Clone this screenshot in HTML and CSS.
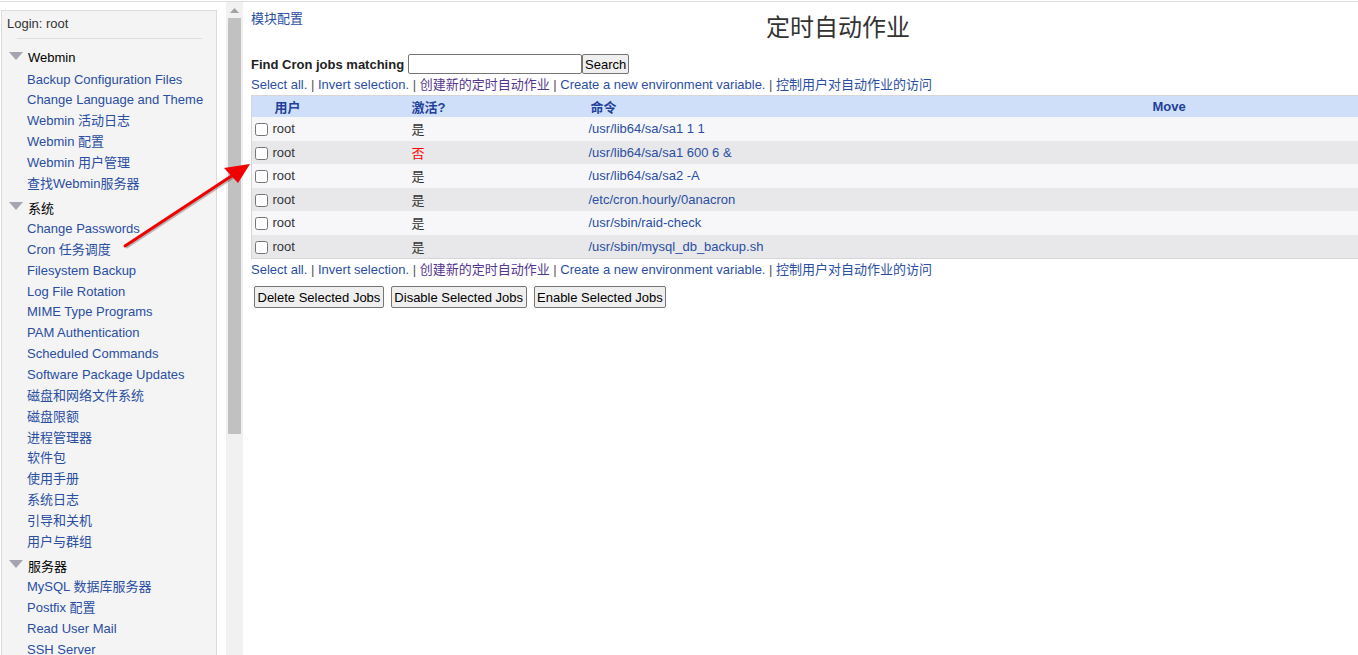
FILE: index.html
```html
<!DOCTYPE html>
<html>
<head>
<meta charset="utf-8">
<title>定时自动作业</title>
<link rel="stylesheet" href="styles.css">
</head>
<body>

<div class="frame">
  <div class="left">
    <div class="panel">
      <div class="login">Login: root</div>
      <hr class="sep">

      <div class="cat cat-first">
        <div class="cat-title"><svg class="tri" width="14" height="8" viewBox="0 0 14 8"><polygon points="0,0 14,0 7,8" fill="#a5a5b0"/></svg>Webmin</div>
        <a href="#">Backup Configuration Files</a>
        <a href="#">Change Language and Theme</a>
        <a href="#">Webmin 活动日志</a>
        <a href="#">Webmin 配置</a>
        <a href="#">Webmin 用户管理</a>
        <a href="#">查找Webmin服务器</a>
      </div>

      <div class="cat">
        <div class="cat-title"><svg class="tri" width="14" height="8" viewBox="0 0 14 8"><polygon points="0,0 14,0 7,8" fill="#a5a5b0"/></svg>系统</div>
        <a href="#">Change Passwords</a>
        <a href="#">Cron 任务调度</a>
        <a href="#">Filesystem Backup</a>
        <a href="#">Log File Rotation</a>
        <a href="#">MIME Type Programs</a>
        <a href="#">PAM Authentication</a>
        <a href="#">Scheduled Commands</a>
        <a href="#">Software Package Updates</a>
        <a href="#">磁盘和网络文件系统</a>
        <a href="#">磁盘限额</a>
        <a href="#">进程管理器</a>
        <a href="#">软件包</a>
        <a href="#">使用手册</a>
        <a href="#">系统日志</a>
        <a href="#">引导和关机</a>
        <a href="#">用户与群组</a>
      </div>

      <div class="cat">
        <div class="cat-title"><svg class="tri" width="14" height="8" viewBox="0 0 14 8"><polygon points="0,0 14,0 7,8" fill="#a5a5b0"/></svg>服务器</div>
        <a href="#">MySQL 数据库服务器</a>
        <a href="#">Postfix 配置</a>
        <a href="#">Read User Mail</a>
        <a href="#">SSH Server</a>
      </div>
    </div>
  </div>

  <div class="scrollbar">
    <div class="scroll-up"><svg width="9" height="5" viewBox="0 0 9 5"><polygon points="0,5 9,5 4.5,0" fill="#a3a3a3"/></svg></div>
    <div class="scroll-thumb"></div>
  </div>

  <div class="main">
    <div class="header">
      <div class="header-left"><a href="#">模块配置</a></div>
      <h1 class="title">定时自动作业</h1>
      <div></div>
    </div>

    <form class="search">
      <b>Find Cron jobs matching</b>
      <input type="text" class="search-box"><button type="button" class="btn">Search</button>
    </form>

    <div class="links">
      <a href="#">Select all.</a> | <a href="#">Invert selection.</a> | <a href="#" class="visited">创建新的定时自动作业</a> | <a href="#">Create a new environment variable.</a> | <a href="#">控制用户对自动作业的访问</a>
    </div>

    <table class="jobs">
      <colgroup>
        <col class="c-check">
        <col class="c-user">
        <col class="c-active">
        <col class="c-cmd">
        <col>
      </colgroup>
      <thead>
        <tr><th></th><th>用户</th><th class="th-flush">激活?</th><th>命令</th><th class="th-flush">Move</th></tr>
      </thead>
      <tbody>
        <tr><td><input type="checkbox"></td><td>root</td><td>是</td><td><a href="#">/usr/lib64/sa/sa1 1 1</a></td><td></td></tr>
        <tr><td><input type="checkbox"></td><td>root</td><td class="off">否</td><td><a href="#">/usr/lib64/sa/sa1 600 6 &amp;</a></td><td></td></tr>
        <tr><td><input type="checkbox"></td><td>root</td><td>是</td><td><a href="#">/usr/lib64/sa/sa2 -A</a></td><td></td></tr>
        <tr><td><input type="checkbox"></td><td>root</td><td>是</td><td><a href="#">/etc/cron.hourly/0anacron</a></td><td></td></tr>
        <tr><td><input type="checkbox"></td><td>root</td><td>是</td><td><a href="#">/usr/sbin/raid-check</a></td><td></td></tr>
        <tr><td><input type="checkbox"></td><td>root</td><td>是</td><td><a href="#">/usr/sbin/mysql_db_backup.sh</a></td><td></td></tr>
      </tbody>
    </table>

    <div class="links links-bottom">
      <a href="#">Select all.</a> | <a href="#">Invert selection.</a> | <a href="#" class="visited">创建新的定时自动作业</a> | <a href="#">Create a new environment variable.</a> | <a href="#">控制用户对自动作业的访问</a>
    </div>

    <div class="actions">
      <button type="button" class="btn">Delete Selected Jobs</button>
      <button type="button" class="btn">Disable Selected Jobs</button>
      <button type="button" class="btn">Enable Selected Jobs</button>
    </div>
  </div>
</div>

<!-- annotation drawn over the screenshot -->
<svg class="arrow" width="300" height="300" viewBox="0 0 300 300">
  <g transform="translate(1,1.5)" opacity="0.25">
    <line x1="125" y1="246" x2="236" y2="173" stroke="#000" stroke-width="3"/>
  </g>
  <line x1="125" y1="246" x2="236" y2="173" stroke="#f20000" stroke-width="3" stroke-linecap="round"/>
  <polygon points="250,164 224,168 238,183" fill="#f20000"/>
</svg>

</body>
</html>
```

FILE: styles.css
```css
html, body {
  margin: 0;
  height: 100%;
  overflow: hidden;
}

body {
  padding-top: 1px;
  box-sizing: border-box;
  font-family: "Liberation Sans", Arial, "Noto Sans CJK SC", sans-serif;
  font-size: 13px;
  color: #333;
  background: #fff;
}

a {
  color: #2a4ea2;
  text-decoration: none;
}

.frame {
  display: flex;
  border-top: 1px solid #dcdcdc;
  height: 100%;
}

/* left menu frame */
.left {
  flex: 0 0 226px;
  padding: 8px 9px 0 1px;
  box-sizing: border-box;
}

.panel {
  background: #f4f4f4;
  border: 1px solid #dcdcdc;
  height: 100%;
  padding-top: 3px;
  box-sizing: border-box;
}

.login {
  line-height: 20px;
  padding-left: 5px;
}

.sep {
  border: 0;
  border-top: 1px solid #dedede;
  margin: 4px 14px 0 15px;
}

.cat {
  margin-top: 2.5px;
}

.cat.cat-first {
  margin-top: 8.5px;
}

.cat-title {
  display: flex;
  align-items: center;
  height: 20px;
  margin-bottom: 2px;
  color: #000;
  padding-left: 7px;
}

.tri {
  margin: -3px 5px 0 0;
}

.cat a {
  display: block;
  line-height: 20.85px;
  padding-left: 25px;
  white-space: nowrap;
}

/* fake scrollbar of the menu frame */
.scrollbar {
  flex: 0 0 17px;
  background: #f1f1f1;
  display: flex;
  flex-direction: column;
  align-items: center;
}

.scroll-up {
  height: 16px;
  display: flex;
  align-items: center;
  justify-content: center;
}

.scroll-thumb {
  width: 13px;
  height: 416px;
  background: #c1c1c1;
}

/* right content frame */
.main {
  flex: 0 0 1190px;
  padding: 7px 8px 0 8px;
  box-sizing: border-box;
}

.header {
  display: grid;
  grid-template-columns: 15% 70% 15%;
  align-items: start;
}

.header-left {
  line-height: 20px;
}

.title {
  margin: 4px 0 0;
  text-align: center;
  font-size: 24px;
  line-height: 30px;
  font-weight: normal;
  color: #333;
}

.search {
  margin: 10px 0 0;
  display: flex;
  align-items: center;
  height: 22px;
}

.search b {
  color: #222;
  margin-right: 4px;
}

.search-box {
  width: 174px;
  height: 20px;
  box-sizing: border-box;
  border: 1px solid #767676;
  border-radius: 2px;
  padding: 1px 2px;
  margin: 0;
}

.btn {
  font-family: "Liberation Sans", Arial, sans-serif;
  font-size: 13px;
  color: #000;
  background: #efefef;
  border: 1px solid #767676;
  border-radius: 2px;
  padding: 1px 2.5px;
  height: 22px;
  margin: 0;
}

.search .btn {
  height: 20px;
  padding: 0 2px;
}

.links {
  line-height: 18px;
  padding-top: 1px;
  color: #555;
  white-space: nowrap;
}

.links.links-bottom {
  padding-top: 2px;
}

.links .visited {
  color: #55368f;
}

.jobs {
  margin-top: 1px;
  width: 1174px;
  table-layout: fixed;
  border-collapse: collapse;
  border: 1px solid #d6d6d6;
}

.c-check { width: 21px; }
.c-user { width: 139px; }
.c-active { width: 177px; }
.c-cmd { width: 564px; }

.jobs th {
  background: #cfdffa;
  color: #1f3f99;
  text-align: left;
  height: 21px;
  padding: 0 2px;
}

.jobs th.th-flush {
  padding-left: 0;
}

.jobs td {
  height: 23.5px;
  padding: 0;
  white-space: nowrap;
}

.jobs tbody tr:nth-child(odd) {
  background: #f7f7f9;
}

.jobs tbody tr:nth-child(even) {
  background: #e8e8ea;
}

.jobs input[type="checkbox"] {
  margin: 0 0 0 3px;
  width: 13px;
  height: 13px;
  vertical-align: middle;
}

.jobs .off {
  color: #ff0000;
}

.actions {
  margin-top: 7px;
  display: flex;
  gap: 7px;
  padding-left: 3px;
}

.arrow {
  position: absolute;
  left: 0;
  top: 0;
  pointer-events: none;
}
```
